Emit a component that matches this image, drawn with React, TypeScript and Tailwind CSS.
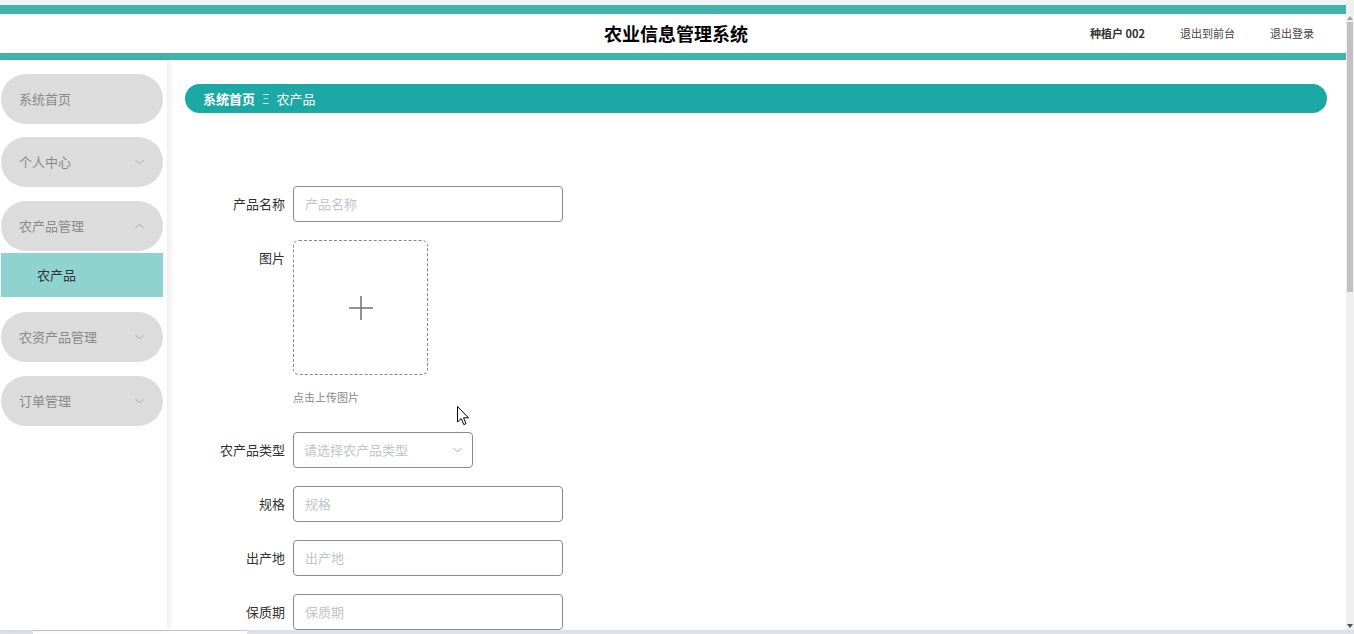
import React from "react";

const font = { fontFamily: '"Noto Sans CJK SC", "Noto Sans", sans-serif' };

function Chevron({ up = false }: { up?: boolean }) {
  return (
    <svg width="9" height="6" viewBox="0 0 9 6" className="text-[#a8a8a8]">
      {up ? (
        <polyline points="0.5,5 4.5,1 8.5,5" fill="none" stroke="currentColor" strokeWidth="1" />
      ) : (
        <polyline points="0.5,1 4.5,5 8.5,1" fill="none" stroke="currentColor" strokeWidth="1" />
      )}
    </svg>
  );
}

function MenuItem({ label, chevron }: { label: string; chevron?: "up" | "down" }) {
  return (
    <div className="ml-[1px] w-[162px] h-[50px] rounded-full bg-[#dcdcdc] flex items-center justify-between pl-[18px] pr-[19px] text-[13px] text-[#8a8a8a]">
      <span>{label}</span>
      {chevron && <Chevron up={chevron === "up"} />}
    </div>
  );
}

function Row({ label, children, mb = "mb-[18px]" }: { label: string; children: React.ReactNode; mb?: string }) {
  return (
    <div className={`flex items-start ${mb}`}>
      <div className="w-[80px] text-right pr-[8px] text-[13px] leading-[36px] text-[#333]">{label}</div>
      {children}
    </div>
  );
}

function Input({ placeholder, w = "w-[270px]" }: { placeholder: string; w?: string }) {
  return (
    <div className={`${w} h-[36px] border border-[#8c8c8c] rounded-[4px] px-[11px] flex items-center text-[13px] text-[#c0c4cc]`}>
      {placeholder}
    </div>
  );
}

export default function App() {
  return (
    <div style={font} className="w-[1354px] h-[634px] overflow-hidden flex flex-col bg-white relative">
      <div className="flex-1 flex min-h-0">
        <div className="flex-1 flex flex-col min-w-0">
          <div className="h-[5px] bg-[#f3f3f3]" />
          <div className="h-[9px] bg-[#40b4ac]" />
          <div className="h-[39px] bg-white flex items-center relative">
            <div className="absolute left-[6px] right-0 text-center text-[18px] font-bold text-black">农业信息管理系统</div>
            <div className="ml-auto flex items-center text-[11px] text-[#444] relative">
              <span className="font-bold text-[#333]">种植户 002</span>
              <span className="ml-[35px]">退出到前台</span>
              <span className="ml-[35px] mr-[32px]">退出登录</span>
            </div>
          </div>
          <div className="h-[7px] bg-[#40b4ac]" />
          <div className="flex-1 flex min-h-0">
            <div className="w-[167px] shrink-0 pt-[14px] flex flex-col shadow-[3px_0_6px_rgba(0,0,0,0.08)] relative z-10">
              <MenuItem label="系统首页" />
              <div className="h-[13px]" />
              <MenuItem label="个人中心" chevron="down" />
              <div className="h-[14px]" />
              <MenuItem label="农产品管理" chevron="up" />
              <div className="mt-[2px] ml-[1px] w-[162px] h-[44px] bg-[#8fd3d1] flex items-center pl-[36px] text-[13px] text-[#333]">农产品</div>
              <div className="h-[15px]" />
              <MenuItem label="农资产品管理" chevron="down" />
              <div className="h-[14px]" />
              <MenuItem label="订单管理" chevron="down" />
            </div>
            <div className="flex-1 min-w-0 pl-[18px] pr-[19px] pt-[24px]">
              <div className="h-[29px] rounded-full bg-[#1ca8a5] flex items-center pl-[18px] text-[13px] text-white">
                <span className="font-bold">系统首页</span>
                <span className="mx-[7px] text-[13px] font-light opacity-90">Ξ</span>
                <span>农产品</span>
              </div>
              <div className="pl-[28px] pt-[73px]">
                <Row label="产品名称">
                  <Input placeholder="产品名称" />
                </Row>
                <Row label="图片" mb="mb-[25px]">
                  <div className="flex flex-col">
                    <div className="w-[135px] h-[135px] border border-dashed border-[#888] rounded-[6px] flex items-center justify-center">
                      <svg width="26" height="26" viewBox="0 0 26 26">
                        <line x1="13" y1="1" x2="13" y2="25" stroke="#707070" strokeWidth="1.5" />
                        <line x1="1" y1="13" x2="25" y2="13" stroke="#707070" strokeWidth="1.5" />
                      </svg>
                    </div>
                    <div className="mt-[12px] h-[20px] leading-[20px] text-[11px] text-[#888]">点击上传图片</div>
                  </div>
                </Row>
                <Row label="农产品类型">
                  <div className="w-[180px] h-[36px] border border-[#8c8c8c] rounded-[4px] pl-[10px] pr-[10px] flex items-center justify-between text-[13px] text-[#c0c4cc]">
                    <span>请选择农产品类型</span>
                    <Chevron />
                  </div>
                </Row>
                <Row label="规格">
                  <Input placeholder="规格" />
                </Row>
                <Row label="出产地">
                  <Input placeholder="出产地" />
                </Row>
                <Row label="保质期">
                  <Input placeholder="保质期" />
                </Row>
              </div>
            </div>
          </div>
        </div>
        <div className="w-[8px] flex flex-col bg-[#f0f0f0]">
          <div className="h-[14px]" />
          <div className="h-[8px] flex items-center justify-center">
            <div className="w-0 h-0 border-l-[3px] border-r-[3px] border-b-[4px] border-l-transparent border-r-transparent border-b-[#a0a0a0]" />
          </div>
          <div className="mx-[1px] h-[270px] bg-[#c1c1c1]" />
          <div className="flex-1" />
          <div className="h-[8px] flex items-center justify-center">
            <div className="w-0 h-0 border-l-[3px] border-r-[3px] border-t-[4px] border-l-transparent border-r-transparent border-t-[#505050]" />
          </div>
        </div>
      </div>
      <div className="h-[4px] flex bg-[#dde2ea]">
        <div className="w-[33px]" />
        <div className="w-[214px] bg-white border-t border-[#c8c8c8]" />
      </div>
      <svg className="absolute left-[457px] top-[406px]" width="13" height="20" viewBox="0 0 13 20">
        <path d="M0.5,0.5 L0.5,16 L4.2,12.6 L6.8,18.6 L9,17.6 L6.5,11.8 L11.5,11.8 Z" fill="white" stroke="black" strokeWidth="1" strokeLinejoin="round" />
      </svg>
    </div>
  );
}
